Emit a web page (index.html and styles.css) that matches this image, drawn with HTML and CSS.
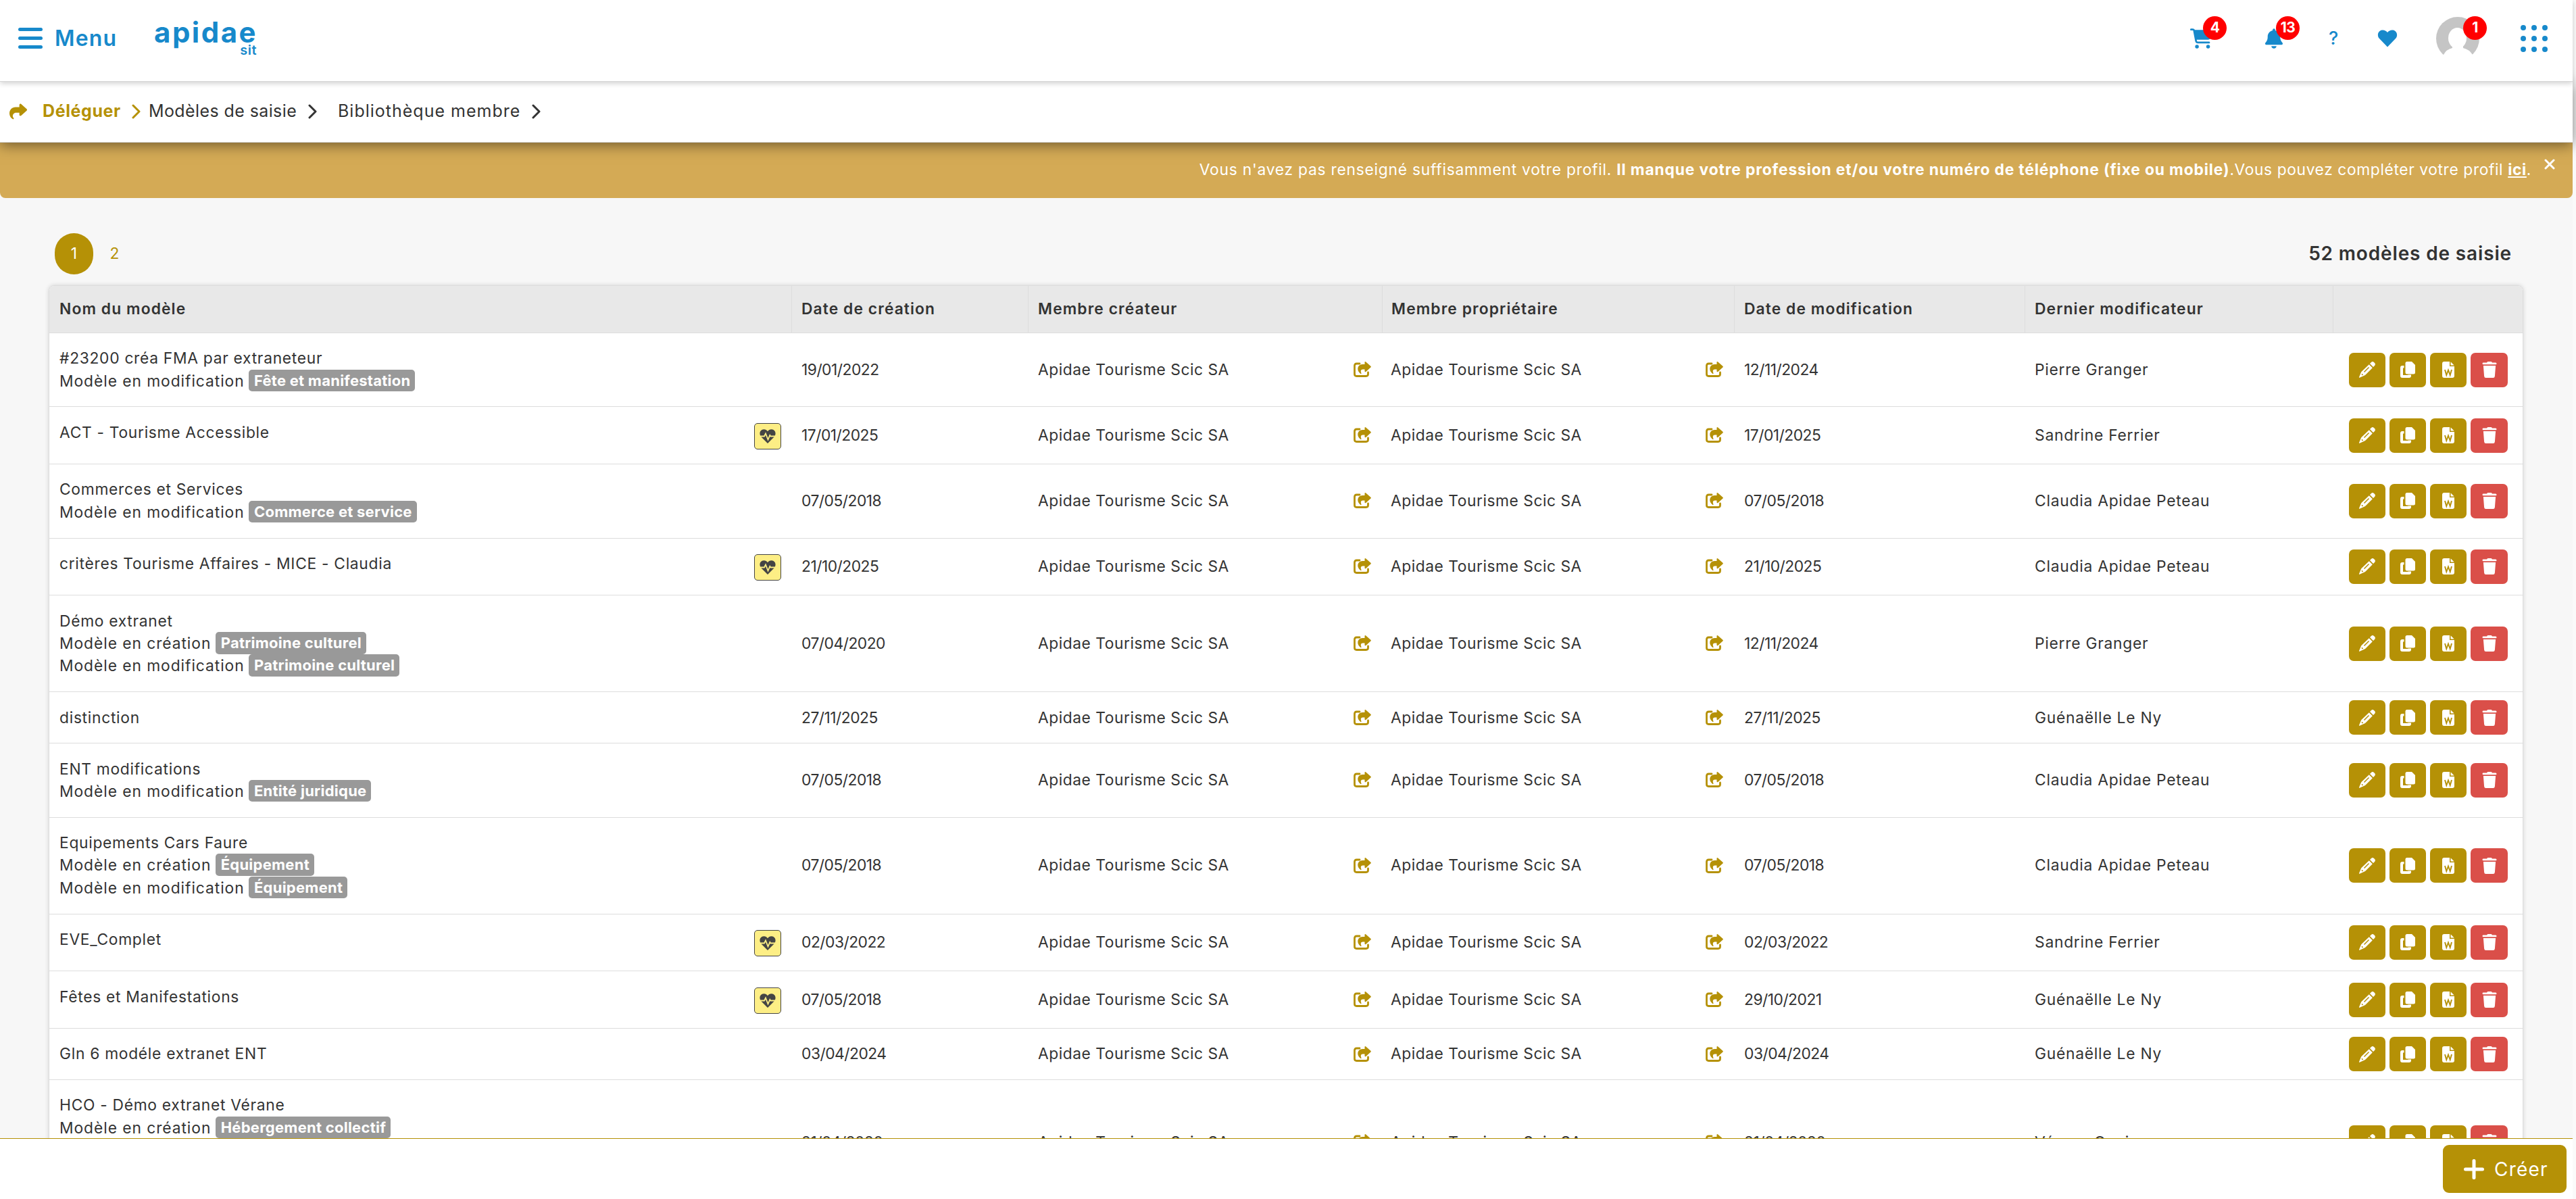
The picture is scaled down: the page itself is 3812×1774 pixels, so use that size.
FILE: index.html
```html
<!DOCTYPE html>
<html lang="fr">
<head>
  <meta charset="UTF-8">
  <title>Modèles de saisie - Bibliothèque membre</title>
  <link rel="stylesheet" href="styles.css">
</head>
<body>
  <!-- Icons -->
  <svg class="sprite">
    <symbol id="i-share" viewBox="0 0 512 512"><path d="M307 34.8c-11.500 5.100-19 16.600-19 29.200v64H176C78.800 128 0 206.800 0 304C0 417.300 81.500 467.900 100.200 478.100c2.500 1.400 5.300 1.900 8.100 1.900c10.900 0 19.700-8.900 19.700-19.700c0-7.500-4.300-14.400-9.800-19.500C108.800 431.900 96 414.400 96 384c0-53 43-96 96-96h96v64c0 12.600 7.400 24.100 19 29.200s25 3 34.400-5.400l160-144c6.700-6.100 10.600-14.700 10.600-23.800s-3.800-17.700-10.600-23.800l-160-144c-9.400-8.500-22.900-10.600-34.400-5.400z"/></symbol>
    <symbol id="i-chevron" viewBox="0 0 13 22"><path d="M2 2l9 9-9 9" fill="none" stroke="currentColor" stroke-width="3" stroke-linecap="round" stroke-linejoin="round"/></symbol>
    <symbol id="i-cart" viewBox="0 0 576 512"><path d="M0 24C0 10.700 10.700 0 24 0H69.500c22 0 41.500 12.800 50.600 32h411c26.300 0 45.500 25 38.600 50.400l-41 152.300c-8.500 31.400-37 53.300-69.500 53.300H170.700l5.400 28.500c2.200 11.300 12.100 19.500 23.600 19.500H488c13.300 0 24 10.700 24 24s-10.700 24-24 24H199.700c-34.600 0-64.300-24.600-70.700-58.500L77.400 54.500c-.7-3.800-4-6.500-7.900-6.500H24C10.700 48 0 37.300 0 24zM128 464a48 48 0 1 1 96 0 48 48 0 1 1-96 0zm336-48a48 48 0 1 1 0 96 48 48 0 1 1 0-96z"/></symbol>
    <symbol id="i-bell" viewBox="0 0 448 512"><path d="M224 0c-17.700 0-32 14.300-32 32V51.200C119 66 64 130.600 64 208v18.800c0 47-17.300 92.400-48.500 127.600l-7.400 8.300c-8.400 9.400-10.400 22.900-5.300 34.400S19.400 416 32 416H416c12.600 0 24-7.400 29.200-18.900s3.100-25-5.300-34.400l-7.400-8.300C401.300 319.200 384 273.900 384 226.800V208c0-77.400-55-142-128-156.800V32c0-17.700-14.300-32-32-32zm45.300 493.300c12-12 18.700-28.300 18.700-45.300H160c0 17 6.700 33.300 18.700 45.300s28.300 18.700 45.300 18.700s33.300-6.700 45.300-18.700z"/></symbol>
    <symbol id="i-heart" viewBox="0 0 29 26"><path d="M14.500 25.500L2 12.500C-1 9 0 1.500 6.500.5c3-.4 6 .9 8 3.500 2-2.600 5-3.900 8-3.500C29 1.500 30 9 27 12.500z"/></symbol>
    <symbol id="i-pulse" viewBox="0 0 24 21"><path d="M12 21L2.500 11.500C-1.500 7 .5.500 6.300.2 8.600.1 10.600 1.200 12 3.200 13.400 1.200 15.400.1 17.700.2 23.500.5 25.500 7 21.500 11.500z"/><path d="M0 10.500h7l2-4 3.500 9 2.800-6.500 1 1.500H24" fill="none" stroke="#fdee85" stroke-width="1.800"/></symbol>
    <symbol id="i-out" viewBox="0 0 26 23"><path d="M9 3H4.500Q1.500 3 1.500 6v12.500q0 3 3 3h14q3 0 3-3V16" fill="none" stroke="currentColor" stroke-width="2.800" stroke-linecap="round"/><path d="M16.500 0.600q.8-.9 1.800-.1l7.100 6.300q.9.900 0 1.800l-7.100 6.300q-1.800 1.200-1.800-.8V11.500h-2.700c-3 0-3.700 2.300-2.300 5.700.3.900-.5 1.200-1.100.7C3.500 13 5.800 4 13.500 4h3z"/></symbol>
    <symbol id="i-pencil" viewBox="0 0 24 24"><path d="M18 1q2-1.700 3.900-.1l1.200 1.200q1.600 2-.1 3.900l-2 2-5-5zM14.800 4.200l5 5L9.300 19.700q-.8.700-1.800 1.100L.8 23.700q-1 .1-.8-.8l2.800-6.700q.4-1 1.200-1.800z"/><path d="M7.500 15.500l7-7M4 18.300l1.500 1.600" fill="none" stroke="#b59106" stroke-width="1.500"/></symbol>
    <symbol id="i-copy" viewBox="0 0 22 24"><path d="M10 0h7l5 5v11q0 2.500-2.500 2.500H10q-2.500 0-2.500-2.500V2.500Q7.500 0 10 0z"/><path d="M5.500 6H3Q0 6 0 9v12q0 3 3 3h10q3 0 3-3v-1.500h-4.500V20H4V9.500h1.500z"/></symbol>
    <symbol id="i-word" viewBox="0 0 18 24"><path d="M3 0h8v7h7v14q0 3-3 3H3q-3 0-3-3V3Q0 0 3 0zM12.500 0.300L17.700 5.500h-5.200z"/><path d="M4 12l2.300 8L9 12.500l2.700 7.500L14 12" fill="none" stroke="#b59106" stroke-width="1.900"/></symbol>
    <symbol id="i-trash" viewBox="0 0 21 24"><path d="M7 .8Q7.400 0 8.300 0h4.400q.9 0 1.300.8l.4.700h5.100q1.500 0 1.500 1.500T19.500 4.300h-18Q0 4.300 0 2.900T1.500 1.500h5.100zM1.400 6h18.200l-1.200 15.500q-.2 2.500-2.500 2.500H5.100q-2.300 0-2.500-2.500z"/></symbol>
  </svg>

  <div class="page">
    <header class="topbar">
      <a class="menu">
        <span class="burger"><i></i><i></i><i></i></span>
        <span class="menu-label">Menu</span>
      </a>
      <div class="logo">
        <span class="logo-name">apidae</span>
        <span class="logo-sub">sit</span>
      </div>
      <nav class="tools">
        <a class="tool cart"><svg><use href="#i-cart"/></svg><b class="badge">4</b></a>
        <a class="tool bell"><svg><use href="#i-bell"/></svg><b class="badge">13</b></a>
        <a class="tool help">?</a>
        <a class="tool fav"><svg><use href="#i-heart"/></svg></a>
        <a class="tool avatar">
          <svg viewBox="0 0 64 64"><circle cx="32" cy="32" r="32" fill="#c5c5c5"/><ellipse cx="31.500" cy="31.500" rx="13.500" ry="15.500" fill="#fff"/><path d="M24 42v4q-9 2-13 10v8h43v-8q-5-8-14-10v-4z" fill="#fff"/></svg>
          <b class="badge">1</b>
        </a>
        <a class="apps"><i></i><i></i><i></i><i></i><i></i><i></i><i></i><i></i><i></i></a>
      </nav>
    </header>

    <div class="breadcrumb">
      <svg class="crumb-icon"><use href="#i-share"/></svg>
      <span class="crumb active">Déléguer</span>
      <svg class="chevron active"><use href="#i-chevron"/></svg>
      <span class="crumb second">Modèles de saisie</span>
      <svg class="chevron"><use href="#i-chevron"/></svg>
      <span class="crumb third">Bibliothèque membre</span>
      <svg class="chevron"><use href="#i-chevron"/></svg>
    </div>

    <div class="alert">
      <p>Vous n'avez pas renseigné suffisamment votre profil. <b>Il manque votre profession et/ou votre numéro de téléphone (fixe ou mobile)</b><span class="more">.Vous pouvez compléter votre profil <a>ici</a>.</span></p>
      <svg class="close" viewBox="0 0 16 16"><path d="M2 2l12 12M14 2L2 14" stroke="#fff" stroke-width="3" stroke-linecap="round"/></svg>
    </div>

    <main class="content">
      <div class="list-head">
        <div class="pages"><span class="pg current">1</span><span class="pg">2</span></div>
        <div class="total">52 modèles de saisie</div>
      </div>
      <div class="table">
        <div class="row head">
          <div>Nom du modèle</div>
          <div>Date de création</div>
          <div>Membre créateur</div>
          <div>Membre propriétaire</div>
          <div>Date de modification</div>
          <div>Dernier modificateur</div>
          <div></div>
        </div>
        <div id="rows"></div>
      </div>
    </main>

    <footer class="footer">
      <button class="create"><svg viewBox="0 0 30 30"><path d="M15 2.500v25M2.500 15h25" stroke="#fff" stroke-width="5" stroke-linecap="round"/></svg>Créer</button>
    </footer>
  </div>
  <script src="app.js"></script>
</body>
</html>
```

FILE: styles.css
```css
* {
  box-sizing: border-box;
}
html {
  background: #fafafa;
}
body {
  margin: 0;
  font-family: Inter, "Open Sans", sans-serif;
  font-size: 22.800px;
  line-height: 33.430px;
  color: #333;
  overflow: hidden;
}
svg {
  display: block;
  fill: currentColor;
}
.sprite {
  display: none;
}
.page {
  display: flex;
  flex-direction: column;
  height: 1774px;
  margin-right: 5px;
  background: #f7f7f7;
}

/* top bar */
.topbar {
  display: flex;
  flex: none;
  height: 121px;
  padding-left: 27px;
  background: #fff;
  border-bottom: 1px solid #d5d5d5;
  box-shadow: 0 2px 8px rgba(0,0,0,0.2);
  color: #1789cb;
  z-index: 3;
}
.menu {
  display: flex;
  align-items: center;
  height: 113px;
  width: 201px;
}
.burger {
  display: flex;
  flex-direction: column;
  gap: 8px;
  width: 36px;
  margin-right: 18px;
}
.burger i {
  height: 5px;
  border-radius: 3px;
  background: #1789cb;
}
.menu-label {
  font-size: 32px;
  font-weight: 600;
  letter-spacing: 1.200px;
}
.logo {
  display: flex;
  flex-direction: column;
  width: 152px;
  padding-top: 26px;
}
.logo-name {
  font-size: 42px;
  font-weight: 700;
  line-height: 44px;
  letter-spacing: 2.500px;
}
.logo-sub {
  align-self: flex-end;
  font-size: 20px;
  font-weight: 600;
  line-height: 8px;
  letter-spacing: 0.500px;
}
.tools {
  display: flex;
  align-items: center;
  height: 113px;
  margin-left: auto;
  padding-right: 37px;
}
.tool {
  position: relative;
}
.badge {
  position: absolute;
  display: flex;
  align-items: center;
  justify-content: center;
  width: 35px;
  height: 35px;
  border-radius: 50%;
  background: #f00;
  color: #fff;
  font-size: 21px;
  letter-spacing: -0.500px;
}
.cart svg { width: 33px; height: 30px; }
.bell svg { width: 26px; height: 30px; }
.fav svg { width: 30px; height: 26px; }
.avatar svg { width: 64px; height: 64px; }
.cart { margin-right: 78px; }
.bell { margin-right: 68px; }
.help { margin-right: 57px; font-size: 27px; font-weight: 500; width: 15px; }
.fav { margin-right: 57px; }
.avatar { margin-right: 61px; }
.cart .badge { left: 19px; top: -18px; }
.bell .badge { left: 16px; top: -18px; }
.avatar .badge { left: 40px; top: -1px; }
.apps {
  display: grid;
  grid-template-columns: repeat(3, 8px);
  gap: 8px;
}
.apps i {
  height: 8px;
  border-radius: 50%;
  background: #1789cb;
}

/* breadcrumb */
.breadcrumb {
  display: flex;
  align-items: center;
  flex: none;
  height: 90px;
  padding: 0 0 1px 14px;
  background: #fff;
  border-bottom: 1px solid #d5d5d5;
  box-shadow: 0 3px 20px rgba(0,0,0,0.500);
  font-size: 25px;
  z-index: 2;
}
.crumb-icon {
  width: 26px;
  height: 26px;
  margin-right: 23px;
  color: #b59106;
}
.crumb.active {
  width: 132px;
  font-weight: 700;
  letter-spacing: 0.600px;
}
.active {
  color: #b59106;
}
.chevron {
  width: 13px;
  height: 22px;
}
.second {
  width: 235px;
  margin-left: 12px;
  margin-right: 1px;
  letter-spacing: 0.400px;
}
.third {
  width: 287px;
  margin-left: 31px;
  letter-spacing: 1px;
}

/* profile alert */
.alert {
  display: flex;
  flex: none;
  height: 82px;
  padding: 24px 26px 0 0;
  border-radius: 0 0 8px 8px;
  background: #d4aa55;
  color: #fff;
}
.alert p {
  margin: -1px 19px 0 auto;
  letter-spacing: 0.750px;
}
.alert b {
  letter-spacing: 0.850px;
}
.alert .more {
  letter-spacing: 0.600px;
}
.alert a {
  font-weight: 700;
  text-decoration: underline;
}
.close {
  width: 16px;
  height: 16px;
}

/* list */
.content {
  flex: 1;
  min-height: 0;
  padding: 52px 73px 0 72px;
  overflow: hidden;
}
.list-head {
  display: flex;
  justify-content: space-between;
  height: 77px;
  padding: 0 17px 0 9px;
}
.pages {
  display: flex;
}
.pg {
  width: 57px;
  height: 61px;
  border-radius: 30px;
  line-height: 60px;
  text-align: center;
  color: #b59106;
}
.pg + .pg {
  margin-left: 3px;
}
.pg.current {
  background: #b59106;
  color: #fff;
}
.total {
  font-size: 28px;
  font-weight: 600;
  line-height: 60px;
  letter-spacing: 0.850px;
}
.table {
  border: 1px solid #ddd;
  border-radius: 8px 8px 0 0;
  background: #fff;
  box-shadow: 0 0 6px rgba(0,0,0,0.150);
  overflow: hidden;
}
.row {
  display: grid;
  grid-template-columns: 1098px 350px 524px 521px 430px 456px 1fr;
  border-bottom: 1px solid #ddd;
}
.row > div {
  display: flex;
  align-items: center;
  padding: 20.300px 15px 21.300px;
}
.row.head {
  height: 70px;
  background: #e8e8e8;
  font-weight: 600;
  letter-spacing: 1.100px;
}
.row.head > div {
  padding: 0 15px 1px;
}
.row.head > div + div {
  border-left: 1px solid #ddd;
}
.row.head > div:nth-child(n+2) {
  padding-left: 14px;
}
.row > div:nth-child(4),
.row.head > div:nth-child(4) {
  padding-left: 13px;
}
.row > .name {
  align-items: flex-start;
  justify-content: space-between;
  letter-spacing: 0.700px;
}
.kind {
  letter-spacing: 0.930px;
}
.member {
  letter-spacing: 0.520px;
}
.row > .date {
  letter-spacing: -0.500px;
}
.by {
  letter-spacing: 0.750px;
}
.row.health {
  height: 84.700px;
}
.row.tall {
  height: 185px;
}
.tag {
  display: inline-block;
  height: 32.500px;
  margin-left: -1px;
  padding: 0 7px 0 8px;
  border-radius: 5px;
  background: #999;
  color: #fff;
  font-size: 22px;
  font-weight: 700;
  line-height: 32px;
  letter-spacing: 0.250px;
  vertical-align: top;
}
.pulse {
  display: flex;
  align-items: center;
  justify-content: center;
  width: 40px;
  height: 39px;
  margin-top: 3px;
  border: 1px solid #444;
  border-radius: 5px;
  background: #fdee85;
  color: #444;
}
.pulse svg {
  width: 24px;
  height: 21px;
}
.out {
  width: 26px;
  height: 23px;
  margin-left: auto;
  margin-right: 1px;
  color: #b59106;
}
.row > .actions {
  gap: 6px;
  padding: 0 0 0 24px;
}
.btn {
  display: flex;
  align-items: center;
  justify-content: center;
  width: 54px;
  height: 51px;
  border-radius: 7px;
  background: #b59106;
  color: #fff;
}
.btn.delete {
  width: 55px;
  background: #da4f49;
}
.btn svg {
  width: 24px;
  height: 24px;
}

/* footer */
.footer {
  display: flex;
  justify-content: flex-end;
  flex: none;
  height: 90px;
  padding: 9px 9px 0 0;
  border-top: 1px solid #b59106;
  background: #fff;
}
.create {
  display: flex;
  align-items: center;
  width: 183px;
  height: 71px;
  padding: 0 0 0 31px;
  border: none;
  border-radius: 9px;
  background: #b59106;
  color: #fff;
  font-family: inherit;
  font-size: 28px;
  letter-spacing: 1.200px;
}
.create svg {
  width: 30px;
  height: 30px;
  margin-right: 15px;
}
```

FILE: app.js
```js
const member = 'Apidae Tourisme Scic SA';

// c = catégorie en création, m = catégorie en modification
const models = [
  { name: '#23200 créa FMA par extraneteur', m: 'Fête et manifestation', created: '19/01/2022', updated: '12/11/2024', by: 'Pierre Granger' },
  { name: 'ACT - Tourisme Accessible', health: true, created: '17/01/2025', updated: '17/01/2025', by: 'Sandrine Ferrier' },
  { name: 'Commerces et Services', m: 'Commerce et service', created: '07/05/2018', updated: '07/05/2018', by: 'Claudia Apidae Peteau' },
  { name: 'critères Tourisme Affaires - MICE - Claudia', health: true, created: '21/10/2025', updated: '21/10/2025', by: 'Claudia Apidae Peteau' },
  { name: 'Démo extranet', c: 'Patrimoine culturel', m: 'Patrimoine culturel', created: '07/04/2020', updated: '12/11/2024', by: 'Pierre Granger' },
  { name: 'distinction', created: '27/11/2025', updated: '27/11/2025', by: 'Guénaëlle Le Ny' },
  { name: 'ENT modifications', m: 'Entité juridique', created: '07/05/2018', updated: '07/05/2018', by: 'Claudia Apidae Peteau' },
  { name: 'Equipements Cars Faure', c: 'Équipement', m: 'Équipement', created: '07/05/2018', updated: '07/05/2018', by: 'Claudia Apidae Peteau' },
  { name: 'EVE_Complet', health: true, created: '02/03/2022', updated: '02/03/2022', by: 'Sandrine Ferrier' },
  { name: 'Fêtes et Manifestations', health: true, created: '07/05/2018', updated: '29/10/2021', by: 'Guénaëlle Le Ny' },
  { name: 'Gln 6 modéle extranet ENT', created: '03/04/2024', updated: '03/04/2024', by: 'Guénaëlle Le Ny' },
  { name: 'HCO - Démo extranet Vérane', c: 'Hébergement collectif', tall: true, created: '21/04/2020', updated: '21/04/2020', by: 'Vérane Genin' }
];

const icon = (id, cls = '') => `<svg class="${cls}"><use href="#i-${id}"/></svg>`;

document.getElementById('rows').innerHTML = models.map(r => `
  <div class="row ${r.health ? 'health' : ''} ${r.tall ? 'tall' : ''}">
    <div class="name">
      <div>
        <div>${r.name}</div>
        ${r.c ? `<div class="kind">Modèle en création <span class="tag">${r.c}</span></div>` : ''}
        ${r.m ? `<div class="kind">Modèle en modification <span class="tag">${r.m}</span></div>` : ''}
      </div>
      ${r.health ? `<span class="pulse">${icon('pulse')}</span>` : ''}
    </div>
    <div class="date">${r.created}</div>
    <div class="member">${member}${icon('out', 'out')}</div>
    <div class="member">${member}${icon('out', 'out')}</div>
    <div class="date">${r.updated}</div>
    <div class="by">${r.by}</div>
    <div class="actions">
      <span class="btn">${icon('pencil')}</span>
      <span class="btn">${icon('copy')}</span>
      <span class="btn">${icon('word')}</span>
      <span class="btn delete">${icon('trash')}</span>
    </div>
  </div>`).join('');
```
